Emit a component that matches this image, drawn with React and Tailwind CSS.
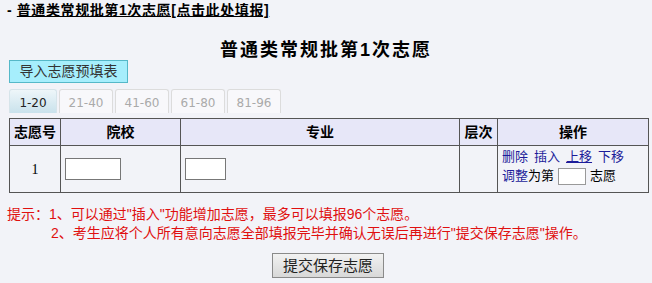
import React, { useState } from 'react';

const TABS = ['1-20', '21-40', '41-60', '61-80', '81-96'];

const FONT = { fontFamily: '"Liberation Sans", "Noto Sans CJK SC", sans-serif' };

export default function App() {
  const [tab, setTab] = useState('1-20');

  return (
    <div className="h-[283px] w-[652px] overflow-hidden bg-[#f2f3f8] text-[13px] text-black" style={FONT}>
      {/* top link */}
      <div className="pl-[7px] pt-[1px] h-[20px] text-[14px] font-bold leading-[18px] tracking-[0.6px]">
        - <a href="#" className="underline text-black">普通类常规批第1次志愿[点击此处填报]</a>
      </div>

      <h1 className="mt-[17px] h-[22px] text-center text-[18px] font-bold leading-[22px] tracking-[2px]" style={{ fontFamily: '"Noto Sans CJK SC", serif' }}>
        普通类常规批第<span style={{ fontFamily: '"Liberation Sans", sans-serif' }}>1</span>次志愿
      </h1>

      <div className="px-[9px]">
        <button className="mt-[1px] h-[23px] w-[119px] border border-[#55b8c8] bg-[#a6eefc] text-[14px] leading-[21px] text-[#333]">
          导入志愿预填表
        </button>

        {/* tabs */}
        <div className="mt-[6px] flex gap-[2px]">
          {TABS.map((t) => {
            const active = t === tab;
            return (
              <button
                key={t}
                onClick={() => setTab(t)}
                className={
                  active
                    ? 'h-[24px] w-[48px] rounded-t-[3px] border border-b-0 border-[#d6e4ea] bg-gradient-to-b from-[#eef6f9] to-[#c9e2ec] text-[13px] leading-[26px] text-[#222]'
                    : 'h-[24px] w-[54px] rounded-t-[3px] border border-b-0 border-[#dcdcdc] bg-[#f8f8fb] text-[13px] leading-[26px] text-[#aaaaaa]'
                }
                style={{ fontFamily: '"DejaVu Sans", sans-serif', fontSize: '12px' }}
              >
                {t}
              </button>
            );
          })}
        </div>

        {/* table */}
        <table className="mt-[5px] w-[640px] table-fixed border-collapse text-[13px]">
          <colgroup>
            <col className="w-[51px]" />
            <col className="w-[120px]" />
            <col className="w-[279px]" />
            <col className="w-[38px]" />
            <col />
          </colgroup>
          <thead>
            <tr className="h-[27px] bg-[#e7e7f8] font-bold">
              <th className="border border-[#555] p-0 text-[14px]">志愿号</th>
              <th className="border border-[#555] p-0 text-[14px]">院校</th>
              <th className="border border-[#555] p-0 text-[14px]">专业</th>
              <th className="border border-[#555] p-0 text-[14px]">层次</th>
              <th className="border border-[#555] p-0 text-[14px]">操作</th>
            </tr>
          </thead>
          <tbody>
            <tr className="h-[47px]">
              <td className="border border-[#555] p-0 text-center text-[14px]" style={{ fontFamily: '"Liberation Serif", serif' }}>1</td>
              <td className="border border-[#555] px-[4px]">
                <input className="block h-[22px] w-[56px] border border-[#777] bg-white" />
              </td>
              <td className="border border-[#555] px-[4px]">
                <input className="block h-[22px] w-[41px] border border-[#777] bg-white" />
              </td>
              <td className="border border-[#555] p-0"></td>
              <td className="border border-[#555] pl-[4px] pt-[2px] align-top text-[13px] leading-[18px]">
                <div className="flex gap-[6px] text-[#1c1c9a]">
                  <a href="#">删除</a>
                  <a href="#">插入</a>
                  <a href="#" className="underline">上移</a>
                  <a href="#">下移</a>
                </div>
                <div className="mt-[1px] flex items-center">
                  <a href="#" className="text-[#1c1c9a]">调整</a>
                  <span>为第</span>
                  <input className="mx-[4px] h-[17px] w-[28px] border border-[#999] bg-white" />
                  <span>志愿</span>
                </div>
              </td>
            </tr>
          </tbody>
        </table>
      </div>

      {/* tips */}
      <div className="mt-[12px] pl-[7px] text-[14px] leading-[19px] text-[#e01010]">
        <div>提示：1、可以通过"插入"功能增加志愿，最多可以填报96个志愿。</div>
        <div className="pl-[44px]">2、考生应将个人所有意向志愿全部填报完毕并确认无误后再进行"提交保存志愿"操作。</div>
      </div>

      <div className="mt-[10px] flex justify-center">
        <button className="ml-[4px] h-[25px] w-[112px] border border-[#8a8a8a] bg-gradient-to-b from-[#f2f2f2] to-[#d8d8d8] text-[15px] leading-[23px] text-[#222]">
          提交保存志愿
        </button>
      </div>
    </div>
  );
}
